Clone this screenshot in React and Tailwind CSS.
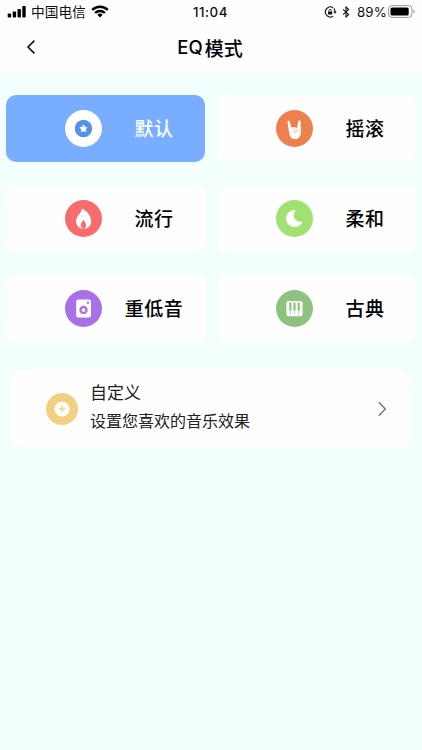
import { useState } from 'react'

const MODES = [
  {
    id: 'default',
    name: '默认',
    color: 'bg-white',
    icon: (
      <svg className="w-[37px] h-[37px]" viewBox="0 0 37 37">
        <circle cx="18.5" cy="18.5" r="8.7" fill="#5591e6" />
        <path fill="#fff" stroke="#fff" strokeWidth="0.8" strokeLinejoin="round" d="M18.5 14.9l1.1 2.3 2.5.35-1.8 1.75.45 2.5-2.25-1.2-2.25 1.2.45-2.5-1.8-1.75 2.5-.35z" />
      </svg>
    )
  },
  {
    id: 'rock',
    name: '摇滚',
    color: 'bg-[#ee804e]',
    icon: (
      <svg className="w-[37px] h-[37px]" viewBox="0 0 37 37">
        <path fill="#fff" d="M11.5 12.2c-.2-1.6 2-1.9 2.4-.3l1.4 5.8c.5-1 1.9-1.1 2.3-.2.6-.7 1.9-.6 2.3.2h1.4l.8-6.1c.2-1.6 2.5-1.4 2.5.2l.3 10.4c0 4.2-2.4 6.9-6 6.9-3.3 0-5-2.2-5.6-5.3z" />
        <path fill="none" stroke="#ee804e" strokeWidth="0.5" strokeOpacity="0.75" strokeLinecap="round" strokeLinejoin="round" d="M17.6 17.8v2M20.1 18v2.2M16.6 21.4l2.9-.6c1.6-.2 1.6 1.5.3 1.8l-1.9.4M21.3 20.4c.6.5 1.4.5 2 .1" />
      </svg>
    )
  },
  {
    id: 'pop',
    name: '流行',
    color: 'bg-[#f96c6c]',
    icon: (
      <svg className="w-[37px] h-[37px]" viewBox="0 0 37 37">
        <path fill="#fff" d="M17 8.4c-.2 2.3-1.2 4-2.8 5.8-1.8 2.1-3.1 4.3-3.1 7.1 0 4.4 3.2 7.6 7.5 7.6s7.6-3.1 7.6-7.4c0-5.6-4-10.4-9.2-13.1z" />
        <path fill="#f96c6c" d="M18.5 19.8c-.4 1.5-2.7 2.8-2.7 5.3 0 1.3.5 2.5 1.4 3.4l.8.3h1l.8-.3c.9-.9 1.3-2.1 1.3-3.4 0-2.5-2.2-3.8-2.6-5.3z" />
      </svg>
    )
  },
  {
    id: 'soft',
    name: '柔和',
    color: 'bg-[#a0e272]',
    icon: (
      <svg className="w-[37px] h-[37px]" viewBox="0 0 37 37">
        <path fill="#fff" d="M19.8 10.2c-5.4-.7-9.7 3.3-9.7 8.3 0 4.7 3.6 8.5 8.3 8.5 3.7 0 6.9-2.2 8.1-5.5-4.5.8-8.2-1.5-8.6-5.3-.2-2.3.4-4.3 1.9-6z" />
      </svg>
    )
  },
  {
    id: 'bass',
    name: '重低音',
    color: 'bg-[#a871e7]',
    icon: (
      <svg className="w-[37px] h-[37px]" viewBox="0 0 37 37">
        <rect x="11.2" y="9.4" width="14.8" height="18" rx="2.2" fill="#fff" />
        <circle cx="22.9" cy="12.7" r="1.2" fill="#a871e7" />
        <circle cx="18.5" cy="20" r="3" fill="none" stroke="#a871e7" strokeWidth="2.3" />
      </svg>
    )
  },
  {
    id: 'classical',
    name: '古典',
    color: 'bg-[#8dc37f]',
    icon: (
      <svg className="w-[37px] h-[37px]" viewBox="0 0 37 37">
        <rect x="10.4" y="10.9" width="16.2" height="15.4" rx="2.4" fill="#fff" />
        <path fill="#8dc37f" d="M13.2 12.5h2.2v8h-2.2zM17.4 12.5h2.2v8h-2.2zM21.6 12.5h2.2v8h-2.2z" />
        <path stroke="#8dc37f" strokeWidth="0.6" d="M14.3 20v5M18.5 20v5M22.7 20v5" />
      </svg>
    )
  }
]

function StatusBar() {
  return (
    <div className="relative h-6 flex items-center justify-between pl-[7px] pr-[6px] text-[#111]">
      <div className="flex items-center">
        <svg className="w-[19px] h-[12px]" viewBox="0 0 19 12" fill="#000">
          <rect x="0.7" y="7.5" width="3.4" height="4" rx="0.8" />
          <rect x="5.7" y="5.5" width="3.4" height="6" rx="0.8" />
          <rect x="10.5" y="3" width="3.4" height="8.5" rx="0.8" />
          <rect x="15.3" y="0" width="3.4" height="11.5" rx="0.8" />
        </svg>
        <span className="ml-[5px] text-[13.7px] leading-none">中国电信</span>
        <svg className="ml-[5px] w-[18px] h-[13px]" viewBox="0 0 18 13" fill="none" stroke="#000">
          <path strokeWidth="2.4" d="M1.2 5a11 11 0 0115.6 0" />
          <path strokeWidth="2.4" d="M4.1 8a7 7 0 019.8 0" />
          <path fill="#000" stroke="none" d="M9 12.6l-2.7-2.8a3.8 3.8 0 015.4 0z" />
        </svg>
      </div>
      <span className="absolute left-[193px] top-[3px] font-['Inter'] font-medium text-[13.3px] leading-[18px] tracking-[0.5px]">11:04</span>
      <div className="flex items-center">
        <svg className="w-[13px] h-[12px]" viewBox="0 0 13 12" fill="none" stroke="#111">
          <path strokeWidth="1.1" d="M9.2 1.8a5 5 0 10.1 8.3M9.8 2.3A5 5 0 0111 6" />
          <path fill="#111" stroke="none" d="M9.2 5.4h3.5L11 7.7z" />
          <rect x="4" y="5.4" width="4.2" height="3.1" rx="0.4" fill="#111" stroke="none" />
          <path strokeWidth="0.8" d="M4.9 5.5v-.9a1.2 1.2 0 012.4 0v.9" />
        </svg>
        <svg className="ml-[5px] w-[8px] h-[12px]" viewBox="0 0 8 12" fill="none" stroke="#111" strokeWidth="1.1">
          <path d="M1 3.3l5.7 5.1L4 11V1l2.7 2.6L1 8.7" />
        </svg>
        <span className="ml-[7px] w-[30px] font-['Inter'] text-[13.3px] leading-[14px] tracking-[0.1px]">89%</span>
        <svg className="ml-px w-[28px] h-[13px] -mt-px" viewBox="0 0 28 13">
          <rect x="0.6" y="0.6" width="23.4" height="11.8" rx="3.4" fill="none" stroke="#999" />
          <rect x="2.5" y="2.4" width="18.2" height="8.2" rx="1.6" fill="#000" />
          <path fill="#aaa" d="M25.4 4.5c1.8.5 1.8 3.5 0 4z" />
        </svg>
      </div>
    </div>
  )
}

function ModeCard({ mode, active, onSelect }) {
  return (
    <button
      onClick={onSelect}
      className={`h-[67px] rounded-[10px] flex items-center pl-[59px] ${
        active ? 'bg-[#78adff] text-white' : 'bg-[#fefefe] text-black'
      }`}
    >
      <span className={`w-[37px] h-[37px] rounded-full flex-shrink-0 ${mode.color}`}>
        {mode.icon}
      </span>
      <span className="ml-[12px] w-20 pb-[2px] text-center font-medium text-[19px] leading-none tracking-[0.5px]">
        {mode.name}
      </span>
    </button>
  )
}

export default function App() {
  const [selected, setSelected] = useState('default')

  return (
    <div className="w-full h-[750px] overflow-hidden bg-[#f2fffd] font-['Noto_Sans_CJK_SC',sans-serif]">
      <header className="h-[72px] bg-[#fefefe]">
        <StatusBar />
        <div className="relative h-12 flex items-center justify-center">
          <button className="absolute left-[26px] top-[15px]">
            <svg className="w-[10px] h-[16px]" viewBox="0 0 10 16" fill="none" stroke="#111" strokeWidth="1.6">
              <path d="M8.4 1.6L2 8l6.4 6.4" />
            </svg>
          </button>
          <h1 className="flex items-center pb-[2px] mr-[2px] text-black text-[19px] leading-none">
            <span className="font-['Inter'] font-medium text-[18.5px] mr-[2px] pt-px">EQ</span>
            <span className="font-medium">模式</span>
          </h1>
        </div>
      </header>

      <div className="mt-[23px] pl-[6px] pr-[6px] grid grid-cols-2 gap-x-3 gap-y-[23px]">
        {MODES.map((mode) => (
          <ModeCard
            key={mode.id}
            mode={mode}
            active={selected === mode.id}
            onSelect={() => setSelected(mode.id)}
          />
        ))}
      </div>

      {/* Custom equalizer entry */}
      <button className="mt-7 ml-[11px] w-[399px] h-[78px] rounded-[12px] bg-[#fefefe] flex items-center pl-[35px] pr-[23px] text-left">
        <svg className="w-[32px] h-[32px] flex-shrink-0" viewBox="0 0 32 32">
          <circle cx="16" cy="16" r="16" fill="#f2d081" />
          <circle cx="16" cy="16" r="7.6" fill="#fff" />
          <path stroke="#f2d081" strokeWidth="1.5" strokeLinecap="round" d="M16 13.3v5.4M13.3 16h5.4" />
        </svg>
        <span className="ml-[12px] pb-[6px] flex-1 flex flex-col text-[#222]">
          <span className="text-[17px] leading-7">自定义</span>
          <span className="text-[16px] leading-7">设置您喜欢的音乐效果</span>
        </span>
        <svg className="w-[10px] h-[16px]" viewBox="0 0 10 16" fill="none" stroke="#777" strokeWidth="1.5">
          <path d="M1.8 1.3L8.3 8l-6.5 6.7" />
        </svg>
      </button>
    </div>
  )
}
